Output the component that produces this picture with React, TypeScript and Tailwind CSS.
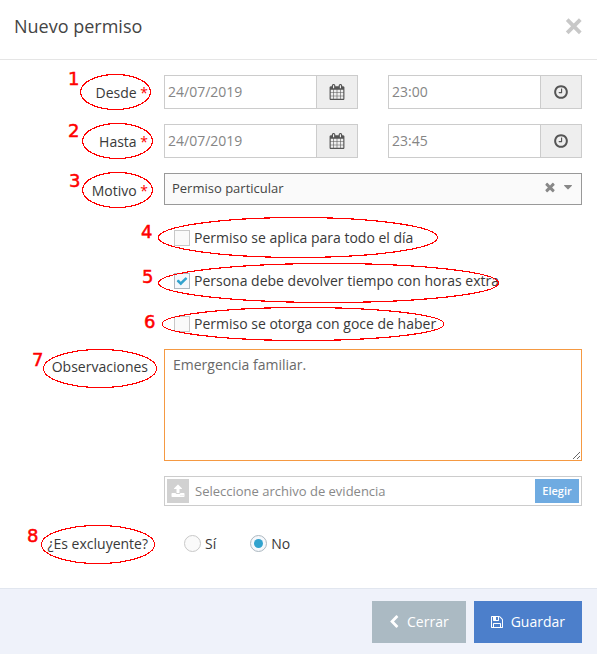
import React, { useState } from 'react';
import clsx from 'clsx';

const icons = {
  calendar:
    'M192 1664h288v-288h-288v288zm352 0h320v-288h-320v288zm-352-352h288v-320h-288v320zm352 0h320v-320h-320v320zm-352-384h288v-288h-288v288zm736 736h320v-288h-320v288zm-384-736h320v-288h-320v288zm768 736h288v-288h-288v288zm-384-352h320v-320h-320v320zm-352-864v-288q0-13-9.5-22.5t-22.5-9.5h-64q-13 0-22.5 9.5t-9.5 22.5v288q0 13 9.5 22.5t22.5 9.5h64q13 0 22.5-9.5t9.5-22.5zm736 864h288v-320h-288v320zm-384-384h320v-288h-320v288zm384 0h288v-288h-288v288zm32-480v-288q0-13-9.5-22.5t-22.5-9.5h-64q-13 0-22.5 9.5t-9.5 22.5v288q0 13 9.5 22.5t22.5 9.5h64q13 0 22.5-9.5t9.5-22.5zm384-64v1280q0 52-38 90t-90 38h-1408q-52 0-90-38t-38-90v-1280q0-52 38-90t90-38h128v-96q0-66 47-113t113-47h64q66 0 113 47t47 113v96h384v-96q0-66 47-113t113-47h64q66 0 113 47t47 113v96h128q52 0 90 38t38 90z',
  clock:
    'M1024 544v448q0 14-9 23t-23 9h-320q-14 0-23-9t-9-23v-64q0-14 9-23t23-9h224v-352q0-14 9-23t23-9h64q14 0 23 9t9 23zm416 352q0-148-73-273t-198-198-273-73-273 73-198 198-73 273 73 273 198 198 273 73 273-73 198-198 73-273zm224 0q0 209-103 385.5t-279.5 279.5-385.5 103-385.5-103-279.5-279.5-103-385.5 103-385.5 279.5-279.5 385.5-103 385.5 103 279.5 279.5 103 385.5z',
  times:
    'M1490 1322q0 40-28 68l-136 136q-28 28-68 28t-68-28l-294-294-294 294q-28 28-68 28t-68-28l-136-136q-28-28-28-68t28-68l294-294-294-294q-28-28-28-68t28-68l136-136q28-28 68-28t68 28l294 294 294-294q28-28 68-28t68 28l136 136q28 28 28 68t-28 68l-294 294 294 294q28 28 28 68z',
  caret:
    'M1408 704q0 26-19 45l-448 448q-19 19-45 19t-45-19l-448-448q-19-19-19-45t19-45 45-19h896q26 0 45 19t19 45z',
  check:
    'M1671 566q0 40-28 68l-724 724-136 136q-28 28-68 28t-68-28l-136-136-362-362q-28-28-28-68t28-68l136-136q28-28 68-28t68 28l294 295 656-657q28-28 68-28t68 28l136 136q28 28 28 68z',
  upload:
    'M1344 1472q0-26-19-45t-45-19-45 19-19 45 19 45 45 19 45-19 19-45zm256 0q0-26-19-45t-45-19-45 19-19 45 19 45 45 19 45-19 19-45zm128-224v320q0 40-28 68t-68 28h-1472q-40 0-68-28t-28-68v-320q0-40 28-68t68-28h427q21 56 70.5 92t110.5 36h256q61 0 110.5-36t70.5-92h427q40 0 68 28t28 68zm-325-648q-17 40-59 40h-256v448q0 26-19 45t-45 19h-256q-26 0-45-19t-19-45v-448h-256q-42 0-59-40-17-39 14-69l448-448q18-19 45-19t45 19l448 448q31 30 14 69z',
  chevronLeft:
    'M1427 301l-531 531 531 531q19 19 19 45t-19 45l-166 166q-19 19-45 19t-45-19l-742-742q-19-19-19-45t19-45l742-742q19-19 45-19t45 19l166 166q19 19 19 45t-19 45z',
  floppy:
    'M512 1536h768v-384h-768v384zm896 0h128v-896q0-14-10-38.5t-20-34.5l-281-281q-10-10-34-20t-39-10v416q0 40-28 68t-68 28h-576q-40 0-68-28t-28-68v-416h-128v1280h128v-416q0-40 28-68t68-28h832q40 0 68 28t28 68v416zm-384-928v-320q0-13-9.5-22.5t-22.5-9.5h-192q-13 0-22.5 9.5t-9.5 22.5v320q0 13 9.5 22.5t22.5 9.5h192q13 0 22.5-9.5t9.5-22.5zm640 32v928q0 40-28 68t-68 28h-1344q-40 0-68-28t-28-68v-1344q0-40 28-68t68-28h928q40 0 88 20t76 48l280 280q28 28 48 76t20 88z',
};

const Icon = ({ name, className }: { name: keyof typeof icons; className?: string }) => (
  <svg viewBox="0 0 1792 1792" fill="currentColor" aria-hidden="true" className={clsx('shrink-0', className)}>
    <path d={icons[name]} />
  </svg>
);

const Row = ({ label, htmlFor, required, children }: {
  label?: string;
  htmlFor?: string;
  required?: boolean;
  children: React.ReactNode;
}) => (
  <div className="grid grid-cols-[148px_1fr] gap-x-4">
    <div className="pt-2 text-right">
      {label && (
        <label htmlFor={htmlFor} className="whitespace-nowrap">
          {label}
          {required && <span className="text-[#f00]"> *</span>}
        </label>
      )}
    </div>
    <div className="min-w-0">{children}</div>
  </div>
);

const PickerInput = ({ id, label, icon, initial }: {
  id: string;
  label: string;
  icon: 'calendar' | 'clock';
  initial: string;
}) => {
  const [value, setValue] = useState(initial);
  return (
    <div className="flex h-[34px] min-w-0 border border-[#ccc]">
      <input
        id={id}
        type="text"
        aria-label={label}
        value={value}
        onChange={e => setValue(e.target.value)}
        className="min-w-0 flex-1 px-[3px] text-[#858585] outline-none"
      />
      <button
        type="button"
        aria-label={`Elegir ${label}`}
        className="flex w-[41px] items-center justify-center border-l border-[#ccc] bg-[#eee] pr-px text-[#555]"
      >
        <Icon name={icon} className="size-4" />
      </button>
    </div>
  );
};

const Checkbox = ({ label, defaultChecked }: { label: string; defaultChecked?: boolean }) => (
  <label className="flex h-5 items-center gap-1 pl-[10px]">
    <span className="grid size-4 shrink-0 place-items-center">
      <input
        type="checkbox"
        defaultChecked={defaultChecked}
        className="peer col-start-1 row-start-1 size-4 appearance-none border border-[#c8c8c8] bg-[#fafafa] checked:border-[#adb8c0] checked:bg-[#f5f8fc]"
      />
      <Icon name="check" className="pointer-events-none invisible col-start-1 row-start-1 size-3 text-[#32a3ce] peer-checked:visible" />
    </span>
    <span className="whitespace-nowrap">{label}</span>
  </label>
);

const Radio = ({ label, defaultChecked }: { label: string; defaultChecked?: boolean }) => (
  <label className="flex items-center gap-1">
    <span className="grid size-[17px] shrink-0 place-items-center">
      <input
        type="radio"
        name="excluyente"
        defaultChecked={defaultChecked}
        className="peer col-start-1 row-start-1 size-[17px] appearance-none rounded-full border border-[#c8c8c8] bg-[#fafafa] checked:border-[#adb8c0] checked:bg-[#f5f8fc]"
      />
      <span className="pointer-events-none invisible col-start-1 row-start-1 size-[9px] rounded-full bg-[#32a3ce] peer-checked:visible" />
    </span>
    {label}
  </label>
);

// numbered callouts drawn over the form, in form coordinates
const callouts = [
  { n: 1, tx: 68, ty: 25, cx: 115.5, cy: 32, rx: 35, ry: 17.5 },
  { n: 2, tx: 68, ty: 77, cx: 117.5, cy: 81, rx: 35, ry: 17.5 },
  { n: 3, tx: 69, ty: 127, cx: 117.5, cy: 130, rx: 35, ry: 17.5 },
  { n: 4, tx: 141, ty: 178, cx: 298, cy: 177.5, rx: 139.5, ry: 20 },
  { n: 5, tx: 142, ty: 223, cx: 328.5, cy: 223, rx: 170, ry: 19.5 },
  { n: 6, tx: 144, ty: 268, cx: 303, cy: 264, rx: 141, ry: 16.5 },
  { n: 7, tx: 32, ty: 306, cx: 100, cy: 308.5, rx: 56.5, ry: 19 },
  { n: 8, tx: 27, ty: 482, cx: 98, cy: 484.5, rx: 56.5, ry: 19 },
];

const Callouts = () => (
  <svg className="pointer-events-none absolute inset-0 size-full">
    {callouts.map(c => (
      <g key={c.n} stroke="#f00">
        <ellipse cx={c.cx} cy={c.cy} rx={c.rx} ry={c.ry} fill="none" strokeWidth="1.2" shapeRendering="crispEdges" />
        <text x={c.tx} y={c.ty} fill="#f00" strokeWidth="0.5" className="font-['DejaVu_Sans',sans-serif] text-[18px]">{c.n}</text>
      </g>
    ))}
  </svg>
);

const App = () => {
  const [motivo, setMotivo] = useState('particular');
  const [observaciones, setObservaciones] = useState('Emergencia familiar.');

  return (
    <div className="min-h-screen bg-white font-['Open_Sans',sans-serif] text-sm text-[#393939]">
      <header className="flex h-[60px] items-center justify-between border-b border-[#e5e5e5] px-[14px] pb-2">
        <h1 className="text-lg text-[#444]">Nuevo permiso</h1>
        <button type="button" aria-label="Cerrar ventana" className="text-[#c8c8c8]">
          <svg viewBox="0 0 18 18" className="size-[18px]" stroke="currentColor" strokeWidth="3.8">
            <path d="M2.2 2.7L15.3 15.8M15.3 2.7L2.2 15.8" />
          </svg>
        </button>
      </header>

      <form className="relative" onSubmit={e => e.preventDefault()}>
        <div className="flex flex-col gap-[15px] pt-[15px] pr-[15px] pb-7">
          <Row label="Desde" htmlFor="desde" required>
            <div className="grid grid-cols-2 gap-[30px]">
              <PickerInput id="desde" label="fecha desde" icon="calendar" initial="24/07/2019" />
              <PickerInput id="desde-hora" label="hora desde" icon="clock" initial="23:00" />
            </div>
          </Row>

          <Row label="Hasta" htmlFor="hasta" required>
            <div className="grid grid-cols-2 gap-[30px]">
              <PickerInput id="hasta" label="fecha hasta" icon="calendar" initial="24/07/2019" />
              <PickerInput id="hasta-hora" label="hora hasta" icon="clock" initial="23:45" />
            </div>
          </Row>

          <Row label="Motivo" htmlFor="motivo" required>
            <div className="relative">
              <select
                id="motivo"
                value={motivo}
                onChange={e => setMotivo(e.target.value)}
                className="block h-8 w-full appearance-none border border-[#999] bg-[#fafafa] pr-12 pb-[2px] pl-[7px] text-[13px] text-[#444] outline-none"
              >
                <option value="" />
                <option value="particular">Permiso particular</option>
              </select>
              <div className="pointer-events-none absolute inset-y-0 right-[7px] flex items-center gap-1 pb-1 text-[#888]">
                <button type="button" aria-label="Quitar motivo" className="pointer-events-auto" onClick={() => setMotivo('')}>
                  <Icon name="times" className="size-[14px]" />
                </button>
                <Icon name="caret" className="size-[14px]" />
              </div>
            </div>
          </Row>

          <Row>
            <div className="flex flex-col gap-[23px] pt-2">
              <Checkbox label="Permiso se aplica para todo el día" />
              <Checkbox label="Persona debe devolver tiempo con horas extra" defaultChecked />
              <Checkbox label="Permiso se otorga con goce de haber" />
            </div>
          </Row>

          <Row label="Observaciones" htmlFor="observaciones">
            <textarea
              id="observaciones"
              value={observaciones}
              onChange={e => setObservaciones(e.target.value)}
              className="block h-28 w-full border border-[#f59942] px-2 py-[5px] text-[#696969] outline-none"
            />
          </Row>

          <Row>
            <label className="flex h-[30px] items-center border border-[#ccc] p-[2px] text-[13px] text-[#888]">
              <input type="file" className="sr-only" />
              <span className="flex h-6 w-[22px] items-center justify-center bg-[#d1d1d1] text-white">
                <Icon name="upload" className="size-[14px]" />
              </span>
              <span className="flex-1 truncate pl-[6px]">Seleccione archivo de evidencia</span>
              <span className="flex h-6 w-11 items-center justify-center bg-[#6fabe1] text-[11px] font-semibold text-white">Elegir</span>
            </label>
          </Row>

          <div className="pt-[5px]">
            <Row label="¿Es excluyente?">
              <div role="radiogroup" aria-label="¿Es excluyente?" className="flex h-[34px] items-center gap-[34px] pt-px pl-5">
                <Radio label="Sí" />
                <Radio label="No" defaultChecked />
              </div>
            </Row>
          </div>
        </div>

        <footer className="flex justify-end gap-2 border-t border-[#e1e6ef] bg-[#eff2fa] px-[15px] pt-3 pb-[11px] text-white [text-shadow:0_-1px_0_rgba(0,0,0,0.25)]">
          <button type="button" className="flex h-[42px] items-center gap-2 bg-[#abbac3] px-[17px]">
            <Icon name="chevronLeft" className="-mx-[2px] size-[14px]" />
            Cerrar
          </button>
          <button type="submit" className="flex h-[42px] items-center gap-2 bg-[#4c7fcb] px-[17px]">
            <Icon name="floppy" className="-mx-px size-[14px]" />
            Guardar
          </button>
        </footer>
        <Callouts />
      </form>
    </div>
  );
};

export default App;
